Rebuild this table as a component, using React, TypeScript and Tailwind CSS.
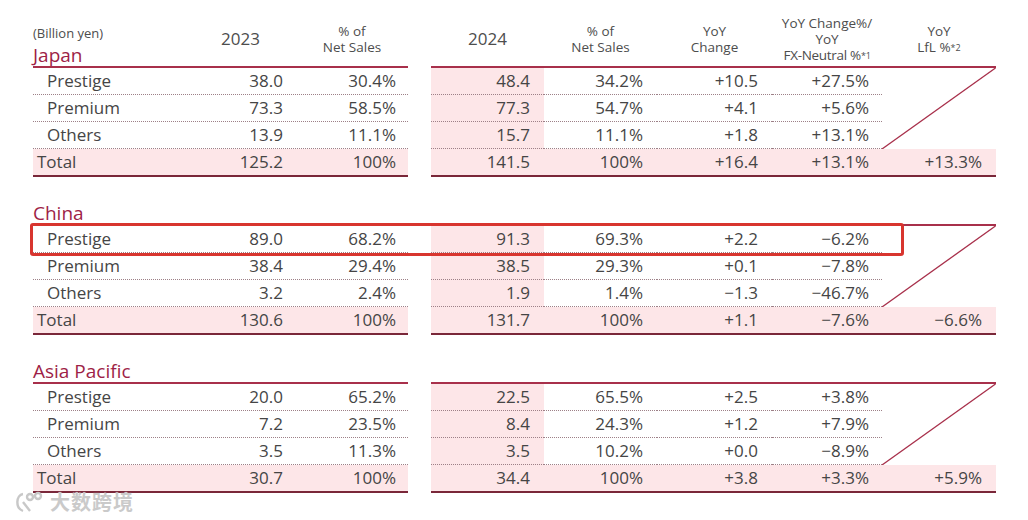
import React from "react";

type Row = { name: string; y23: string; p23: string; y24: string; p24: string; chg: string; fx: string };
type Section = { name: string; rows: Row[]; total: Row & { lfl: string }; highlight?: boolean };

const sections: Section[] = [
  {
    name: "Japan",
    rows: [
      { name: "Prestige", y23: "38.0", p23: "30.4%", y24: "48.4", p24: "34.2%", chg: "+10.5", fx: "+27.5%" },
      { name: "Premium", y23: "73.3", p23: "58.5%", y24: "77.3", p24: "54.7%", chg: "+4.1", fx: "+5.6%" },
      { name: "Others", y23: "13.9", p23: "11.1%", y24: "15.7", p24: "11.1%", chg: "+1.8", fx: "+13.1%" },
    ],
    total: { name: "Total", y23: "125.2", p23: "100%", y24: "141.5", p24: "100%", chg: "+16.4", fx: "+13.1%", lfl: "+13.3%" },
  },
  {
    name: "China",
    highlight: true,
    rows: [
      { name: "Prestige", y23: "89.0", p23: "68.2%", y24: "91.3", p24: "69.3%", chg: "+2.2", fx: "−6.2%" },
      { name: "Premium", y23: "38.4", p23: "29.4%", y24: "38.5", p24: "29.3%", chg: "+0.1", fx: "−7.8%" },
      { name: "Others", y23: "3.2", p23: "2.4%", y24: "1.9", p24: "1.4%", chg: "−1.3", fx: "−46.7%" },
    ],
    total: { name: "Total", y23: "130.6", p23: "100%", y24: "131.7", p24: "100%", chg: "+1.1", fx: "−7.6%", lfl: "−6.6%" },
  },
  {
    name: "Asia Pacific",
    rows: [
      { name: "Prestige", y23: "20.0", p23: "65.2%", y24: "22.5", p24: "65.5%", chg: "+2.5", fx: "+3.8%" },
      { name: "Premium", y23: "7.2", p23: "23.5%", y24: "8.4", p24: "24.3%", chg: "+1.2", fx: "+7.9%" },
      { name: "Others", y23: "3.5", p23: "11.3%", y24: "3.5", p24: "10.2%", chg: "+0.0", fx: "−8.9%" },
    ],
    total: { name: "Total", y23: "30.7", p23: "100%", y24: "34.4", p24: "100%", chg: "+3.8", fx: "+3.3%", lfl: "+5.9%" },
  },
];

const dot = "border-b border-dotted border-[#9d8087]";

function LeftTable({ s }: { s: Section }) {
  return (
    <div className="w-[375px] border-t-2 border-b-2 border-t-[#a8304b] border-b-[#7a2739]">
      {s.rows.map((r) => (
        <div key={r.name} className={`flex h-[27px] items-center ${dot}`}>
          <div className="w-[152px] pl-[14px]">{r.name}</div>
          <div className="w-[111px] pr-[13px] text-right">{r.y23}</div>
          <div className="w-[112px] pr-[12px] text-right">{r.p23}</div>
        </div>
      ))}
      <div className="flex h-[26px] items-center bg-[#fde6e8]">
        <div className="w-[152px] pl-[4px]">Total</div>
        <div className="w-[111px] pr-[13px] text-right">{s.total.y23}</div>
        <div className="w-[112px] pr-[12px] text-right">{s.total.p23}</div>
      </div>
    </div>
  );
}

function RightTable({ s }: { s: Section }) {
  const t = s.total;
  return (
    <div className="w-[565px] border-t-2 border-b-2 border-t-[#a8304b] border-b-[#7a2739]">
      <div className="relative">
        {s.rows.map((r) => (
          <div key={r.name} className="flex h-[27px]">
            <div className={`flex w-[113px] items-center justify-end bg-[#fde6e8] pr-[14px] ${dot}`}>{r.y24}</div>
            <div className={`flex w-[113px] items-center justify-end pr-[14px] ${dot}`}>{r.p24}</div>
            <div className={`flex w-[115px] items-center justify-end pr-[14px] ${dot}`}>{r.chg}</div>
            <div className={`flex w-[110px] items-center justify-end pr-[13px] ${dot}`}>{r.fx}</div>
            <div className="w-[114px]" />
          </div>
        ))}
        <svg className="absolute right-0 top-0" width="114" height="81" viewBox="0 0 114 81">
          <line x1="0" y1="81" x2="113.5" y2="0" stroke="#a8304b" strokeWidth="1.3" />
        </svg>
      </div>
      <div className="flex h-[26px] items-center bg-[#fde6e8]">
        <div className="w-[113px] pr-[14px] text-right">{t.y24}</div>
        <div className="w-[113px] pr-[14px] text-right">{t.p24}</div>
        <div className="w-[115px] pr-[14px] text-right">{t.chg}</div>
        <div className="w-[110px] pr-[13px] text-right">{t.fx}</div>
        <div className="w-[114px] pr-[14px] text-right">{t.lfl}</div>
      </div>
    </div>
  );
}

function Head({ w, children, big }: { w: string; children: React.ReactNode; big?: boolean }) {
  return (
    <div className={`flex ${w} items-center justify-center text-center ${big ? "text-[17px]" : "text-[13.5px] leading-[16px]"}`}>
      <div>{children}</div>
    </div>
  );
}

function Sup({ children }: { children: React.ReactNode }) {
  return <sup className="relative -top-[1px] text-[9px]">{children}</sup>;
}

export default function App() {
  return (
    <div className="relative h-[520px] w-[1028px] overflow-hidden bg-white pl-[33px] font-['Open_Sans','Liberation_Sans',sans-serif] text-[17px] text-[#454545]">
      {sections.map((s, i) => (
        <div key={s.name}>
          {i === 0 ? (
            <div className="flex h-[66px] gap-[23px] pt-[12px] text-[#4d4d4d]">
              <div className="flex w-[375px]">
                <div className="flex w-[152px] flex-col justify-end">
                  <div className="mb-[3px] text-[13px] leading-[15px]">(Billion yen)</div>
                  <div className="text-[19px] leading-[22px] text-[#9e1f47]">{s.name}</div>
                </div>
                <Head w="w-[111px]" big>2023</Head>
                <Head w="w-[112px]">% of<br />Net Sales</Head>
              </div>
              <div className="flex w-[565px]">
                <Head w="w-[113px]" big>2024</Head>
                <Head w="w-[113px]">% of<br />Net Sales</Head>
                <Head w="w-[115px]">YoY<br />Change</Head>
                <Head w="w-[110px]">
                  <span className="whitespace-nowrap">YoY Change%/</span><br />YoY<br />
                  <span className="whitespace-nowrap tracking-[-0.3px]">FX-Neutral %<Sup>*1</Sup></span>
                </Head>
                <Head w="w-[114px]">YoY<br />LfL %<Sup>*2</Sup></Head>
              </div>
            </div>
          ) : (
            <div className="mt-[25px] h-[22px] text-[19px] leading-[22px] text-[#9e1f47]">{s.name}</div>
          )}
          <div className="relative flex gap-[23px]">
            <LeftTable s={s} />
            <RightTable s={s} />
            {s.highlight && (
              <div className="absolute left-[-3px] top-[-1px] h-[33px] w-[874px] rounded-[3px] border-[3px] border-[#d8352f]" />
            )}
          </div>
        </div>
      ))}

      <div className="absolute left-[12px] top-[490px] flex items-center gap-[6px] text-[#cacaca]">
        <svg width="32" height="24" viewBox="0 0 32 24" fill="none" stroke="#c8c8c8" strokeWidth="2.4">
          <path d="M11 4 C4 5 3 18 11 21" />
          <path d="M11 12 L18 21" />
          <circle cx="18" cy="7" r="3" />
          <circle cx="26" cy="6" r="3" />
        </svg>
        <span className="font-['Noto_Sans_CJK_SC',sans-serif] text-[20px] font-bold leading-[24px] tracking-[1px] [text-shadow:0_0_1px_#fff]">大数跨境</span>
      </div>
    </div>
  );
}
